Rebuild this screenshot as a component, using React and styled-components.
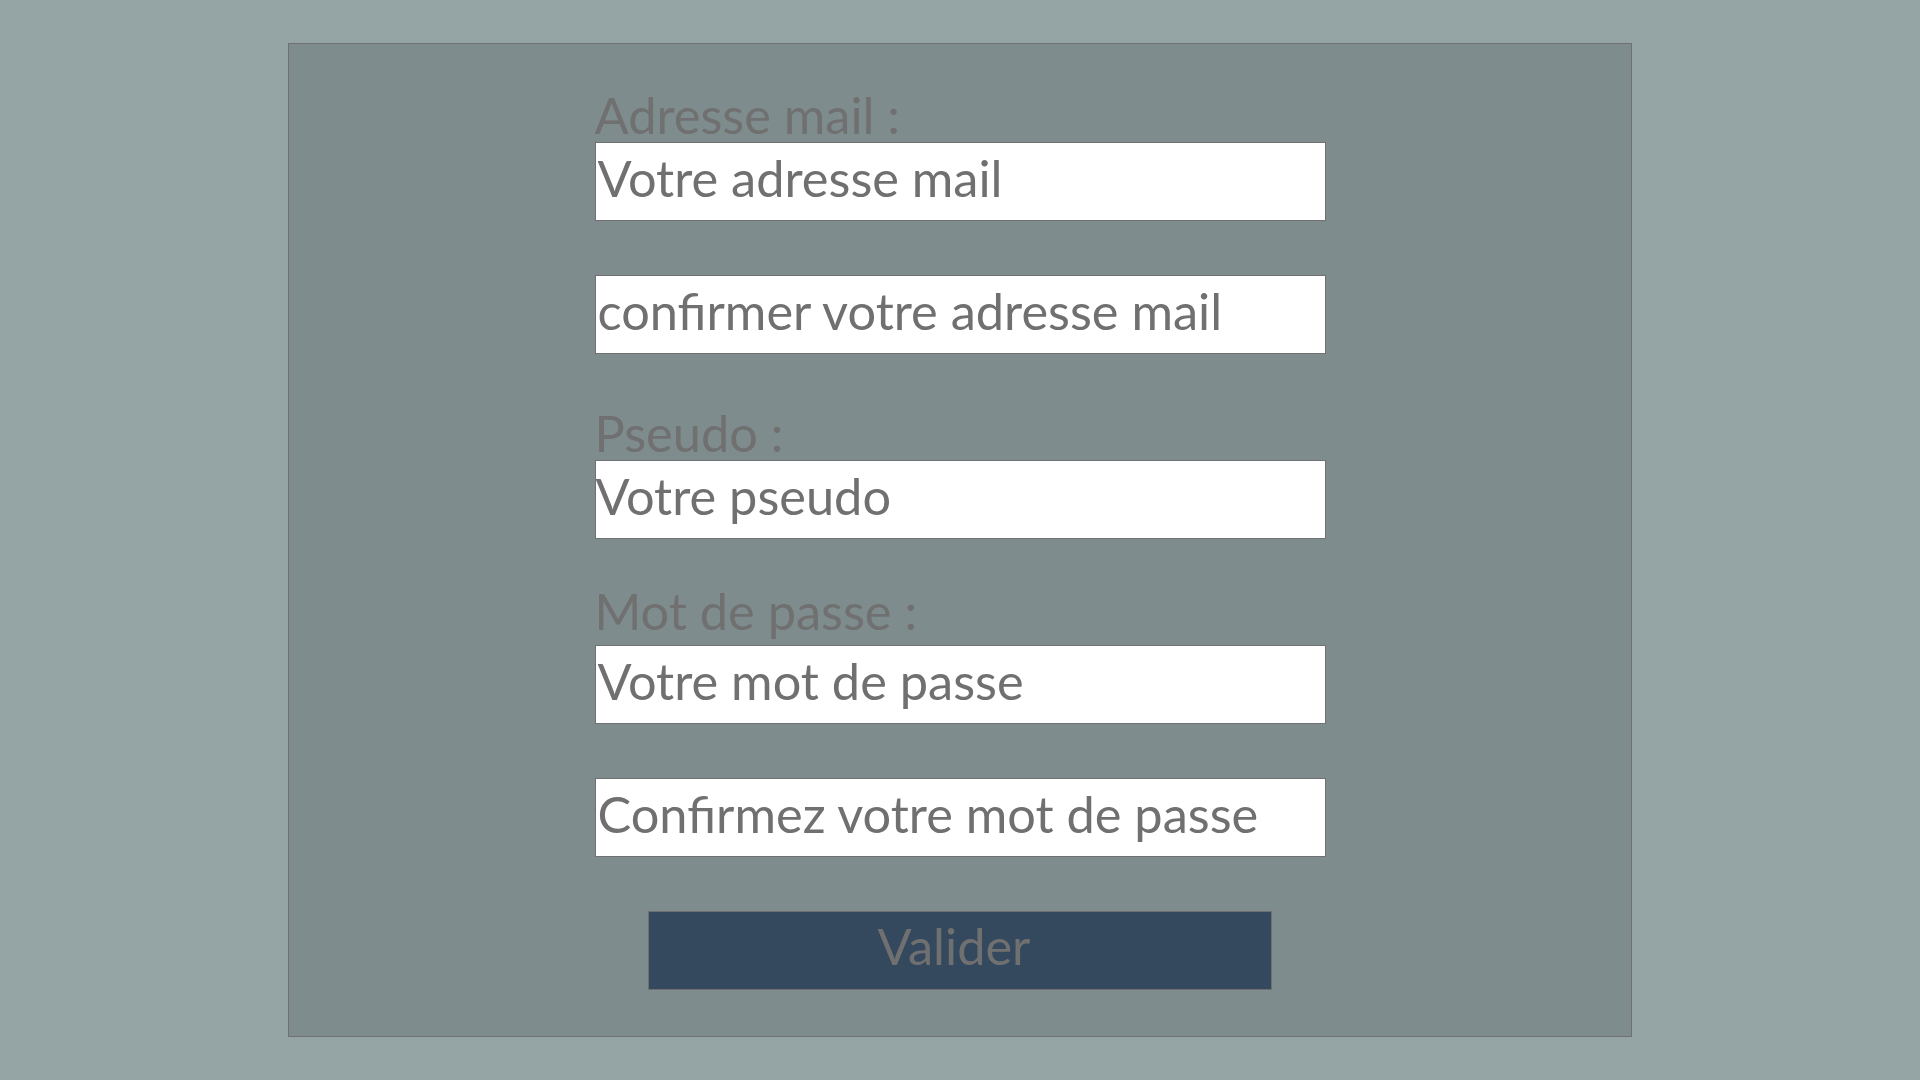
import React from 'react'
import styled, { createGlobalStyle } from 'styled-components'

const GlobalStyle = createGlobalStyle`
  html, body {
    margin: 0;
    padding: 0;
    background: #95a5a6;
    font-family: Lato, "Liberation Sans", sans-serif;
  }
  * {
    box-sizing: border-box;
  }
`

export default function App() {
  return (
    <>
      <GlobalStyle />
      <Page>
        <Panel>
          <Form onSubmit={(e) => e.preventDefault()}>
            <Label htmlFor="mail" $top={0}>Adresse mail :</Label>
            <Input id="mail" type="email" placeholder="Votre adresse mail" />
            <Input type="email" placeholder="confirmer votre adresse mail" $top={54.7} />

            <Label htmlFor="pseudo" $top={50.3}>Pseudo :</Label>
            <Input id="pseudo" type="text" placeholder="Votre pseudo" $flush />

            <Label htmlFor="pass" $top={42.6} $bottom={7.7}>Mot de passe :</Label>
            <Input id="pass" type="password" placeholder="Votre mot de passe" />
            <Input type="password" placeholder="Confirmez votre mot de passe" $top={54.3} />

            <Button type="submit">Valider</Button>
          </Form>
        </Panel>
      </Page>
    </>
  )
}

const Page = styled.div`
  padding-top: 43px;
  display: flex;
  justify-content: center;
`

const Panel = styled.div`
  width: 70%;
  background: #7f8c8d;
  border: 1px solid #707070;
  padding: 42px 0 46px;
`

const Form = styled.form`
  display: flex;
  flex-direction: column;
  align-items: center;
`

const Label = styled.label`
  display: block;
  width: 731px;
  height: 56px;
  padding-top: 2px;
  font-size: 50.5px;
  line-height: 54px;
  color: #707070;
  margin-top: ${(p) => p.$top || 0}px;
  margin-bottom: ${(p) => p.$bottom || 0}px;
`

const Input = styled.input`
  display: block;
  width: 731px;
  height: 78.7px;
  margin: ${(p) => p.$top || 0}px 0 0;
  padding: 0 2px 8px ${(p) => (p.$flush ? 0 : 2)}px;
  border: 1px solid #707070;
  border-radius: 0;
  background: #ffffff;
  font-family: Lato, "Liberation Sans", sans-serif;
  font-size: 50.5px;
  color: #707070;
  outline: none;

  &::placeholder {
    color: #707070;
    opacity: 1;
  }
`

const Button = styled.button`
  width: 624px;
  height: 78.7px;
  margin-top: 54px;
  padding: 0 12px 10px 0;
  background: #34495e;
  border: 1px solid #707070;
  border-radius: 0;
  font-family: Lato, "Liberation Sans", sans-serif;
  font-size: 50.5px;
  color: #707070;
  cursor: pointer;
`
